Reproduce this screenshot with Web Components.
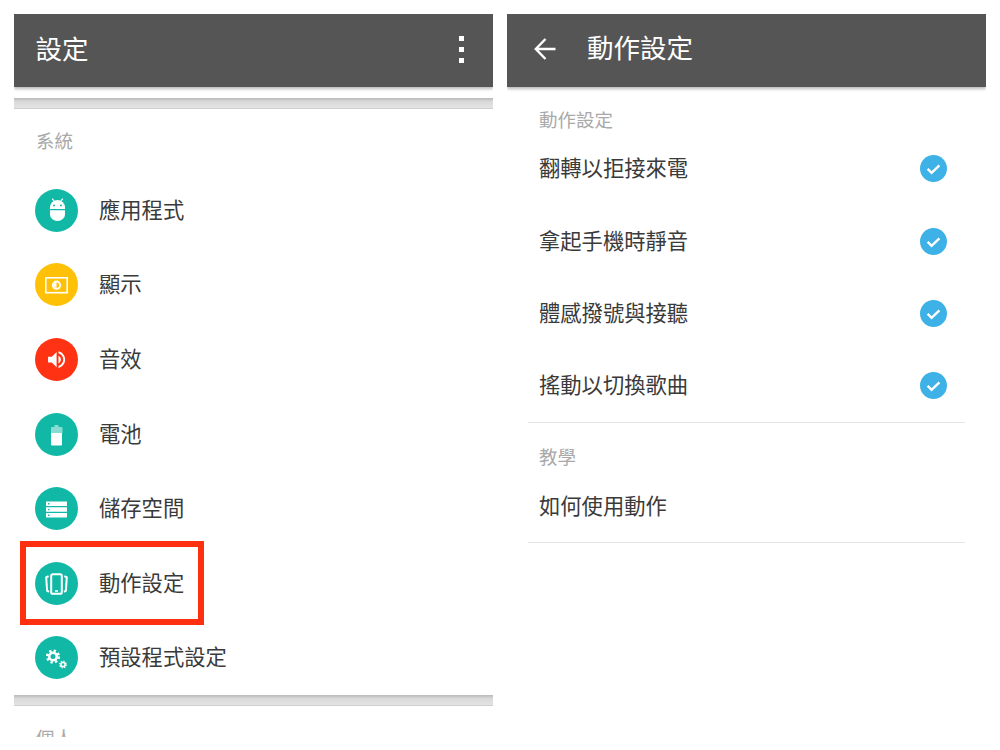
<!DOCTYPE html>
<html lang="zh-Hant">
<head>
<meta charset="UTF-8">
<title>動作設定</title>
<style>
  html, body { margin: 0; background: #fff; }
  body {
    width: 1000px; height: 750px; overflow: hidden;
    font-family: "Noto Sans CJK TC", "Noto Sans", sans-serif;
  }
  #screens { display: flex; gap: 14px; padding: 14px 14px 0; height: 723px; }
</style>
</head>
<body>
<div id="screens">
  <phone-panel>
    <app-bar title="設定" menu></app-bar>
    <gray-band style="margin-top:11px"></gray-band>
    <section-label style="--label-x:22px;--label-h:64px">系統</section-label>
    <setting-row color="#12b8a6" icon="android">應用程式</setting-row>
    <setting-row color="#ffc107" icon="display">顯示</setting-row>
    <setting-row color="#ff3213" icon="sound">音效</setting-row>
    <setting-row color="#12b8a6" icon="battery">電池</setting-row>
    <setting-row color="#12b8a6" icon="storage">儲存空間</setting-row>
    <setting-row color="#12b8a6" icon="motion" marked>動作設定</setting-row>
    <setting-row color="#12b8a6" icon="gears">預設程式設定</setting-row>
    <gray-band></gray-band>
    <section-label style="--label-x:22px;--label-h:64px">個人</section-label>
  </phone-panel>
  <phone-panel>
    <app-bar title="動作設定" back></app-bar>
    <detail-group>
      <section-label style="--label-x:11px;--label-h:25px;padding-top:20.5px">動作設定</section-label>
      <check-row checked>翻轉以拒接來電</check-row>
      <check-row checked>拿起手機時靜音</check-row>
      <check-row checked>體感撥號與接聽</check-row>
      <check-row checked>搖動以切換歌曲</check-row>
    </detail-group>
    <detail-group>
      <section-label style="--label-x:11px;--label-h:25px;padding-top:22px">教學</section-label>
      <check-row>如何使用動作</check-row>
    </detail-group>
  </phone-panel>
</div>

<script>
  // icons are drawn on the 43x43 circle
  const gear = (x, y, r, w) => `
    <circle cx="${x}" cy="${y}" r="${r}" fill="none" stroke="#fff" stroke-width="${w}"/>
    <circle cx="${x}" cy="${y}" r="${r + w * .75}" fill="none" stroke="#fff" stroke-width="${w}"
      stroke-dasharray="${(r + w * .75) * .785 * .5} ${(r + w * .75) * .785 * .5}"/>`;

  const ICONS = {
    android: `
      <path d="M15 20v-1.5a7.5 7.5 0 0 1 15 0V20z" fill="#fff"/>
      <path d="M15 21.2h15v4.3a7.5 6.5 0 0 1-15 0z" fill="#fff"/>
      <path d="M17.3 9.6l1.7 2.6M27.7 9.6L26 12.2" stroke="#fff" stroke-width="1.2"/>
      <circle cx="19" cy="16.6" r="1" fill="#12b8a6"/><circle cx="26" cy="16.6" r="1" fill="#12b8a6"/>`,
    display: `
      <rect x="10.8" y="14.8" width="21.4" height="14.9" fill="none" stroke="#fff" stroke-width="1.6"/>
      <circle cx="21.5" cy="22.2" r="4.6" fill="#fff"/>
      <circle cx="21.5" cy="22.2" r="2.7" fill="#ffc107"/>
      <path d="M21.5 19.5a2.7 2.7 0 0 0 0 5.4z" fill="#fff"/>`,
    sound: `
      <path transform="translate(10.2 10.2) scale(.95)" fill="#fff"
        d="M3 9v6h4l5 5V4L7 9H3zm13.5 3c0-1.77-1.02-3.29-2.5-4.03v8.05c1.48-.73 2.5-2.25 2.5-4.02zM14 3.23v2.06c2.89.86 5 3.54 5 6.71s-2.11 5.85-5 6.71v2.06c4.01-.91 7-4.49 7-8.77s-2.99-7.86-7-8.77z"/>`,
    battery: `
      <path d="M19.5 12h4v2h3a1 1 0 0 1 1 1v5H16v-5a1 1 0 0 1 1-1h2.5z" fill="#fff" fill-opacity=".5"/>
      <path d="M16 20h11v11.5a1 1 0 0 1-1 1h-9a1 1 0 0 1-1-1z" fill="#fff"/>`,
    storage: `
      <path fill="#fff" fill-rule="evenodd" d="M11 14.5h21V19H11zM13 16v1.4h1.4V16zM11 20.3h21v4.5H11zM13 21.9v1.4h1.4v-1.4zM11 26h21v4.5H11zM13 27.6V29h1.4v-1.4z"/>`,
    motion: `
      <rect x="16.2" y="12.2" width="10.6" height="19.6" rx="1.6" fill="none" stroke="#fff" stroke-width="2"/>
      <rect x="20" y="28.2" width="3" height="1.6" fill="#fff"/>
      <path d="M13.6 14.2l-2.4 1.2.9 13.2 1.9 1.2M29.4 14.2l2.4 1.2-.9 13.2-1.9 1.2" fill="none" stroke="#fff" stroke-width="2"/>`,
    gears: gear(18, 20.5, 3.8, 2.6) + gear(28, 28.5, 2.1, 1.5)
  };

  class PhonePanel extends HTMLElement {
    connectedCallback() {
      this.attachShadow({ mode: 'open' }).innerHTML = `
        <style>
          :host { display: block; width: 479px; height: 723px; overflow: hidden; background: #fff; }
        </style>
        <slot></slot>`;
    }
  }

  class AppBar extends HTMLElement {
    connectedCallback() {
      const back = this.hasAttribute('back');
      this.attachShadow({ mode: 'open' }).innerHTML = `
        <style>
          :host {
            display: flex; align-items: center; height: 73px; box-sizing: border-box;
            padding: 0 0 3px 21.5px; background: #555; color: #fff;
            box-shadow: 0 2px 3px rgba(0,0,0,.28); position: relative;
          }
          h1 { margin: 0; padding-bottom: ${back ? 4 : 2}px; font-size: 26.5px; line-height: 36px; font-weight: 400; flex: 1; }
          .back { width: 22px; height: 22px; margin: 0 31.5px 0 5px; display: block; flex: none; }
          .dots { display: flex; flex-direction: column; gap: 6px; margin-right: 29px; }
          .dots i { width: 5px; height: 5px; background: #fff; }
        </style>
        ${back ? `<svg class="back" viewBox="0 0 22 22"><path d="M21.5 11H2M11.5 1L1.8 11l9.7 10" fill="none" stroke="#fff" stroke-width="2.4"/></svg>` : ''}
        <h1>${this.getAttribute('title')}</h1>
        ${this.hasAttribute('menu') ? `<div class="dots"><i></i><i></i><i></i></div>` : ''}`;
    }
  }

  class GrayBand extends HTMLElement {
    connectedCallback() {
      this.attachShadow({ mode: 'open' }).innerHTML = `
        <style>
          :host {
            display: block; height: 11px; box-sizing: border-box;
            background: linear-gradient(#b9b9b9, #d9d9d9 35%, #e2e2e2 90%);
            border-bottom: 1px solid #cfcfcf;
          }
        </style>`;
    }
  }

  class SectionLabel extends HTMLElement {
    connectedCallback() {
      this.attachShadow({ mode: 'open' }).innerHTML = `
        <style>
          :host {
            display: flex; align-items: center; height: var(--label-h);
            padding-left: var(--label-x); color: #a9a9a9;
            font-size: 18.5px; font-weight: 400;
          }
          span { display: block; padding-bottom: 3px; }
        </style>
        <span><slot></slot></span>`;
    }
  }

  class SettingRow extends HTMLElement {
    connectedCallback() {
      const marked = this.hasAttribute('marked');
      this.attachShadow({ mode: 'open' }).innerHTML = `
        <style>
          :host {
            display: flex; align-items: center; gap: 21px; height: 74.6px;
            padding-left: 21px; color: #3a3a3a; font-size: 21.3px; position: relative;
          }
          svg { width: 43px; height: 43px; flex: none; display: block; }
          span { display: block; padding-bottom: 4px; }
          .mark {
            position: absolute; left: 6px; top: -5px; width: 184px; height: 84px;
            box-sizing: border-box; border: 6px solid #ff3010;
          }
        </style>
        <svg viewBox="0 0 43 43"><circle cx="21.5" cy="21.5" r="21.5" fill="${this.getAttribute('color')}"/>${ICONS[this.getAttribute('icon')]}</svg>
        <span><slot></slot></span>
        ${marked ? `<div class="mark"></div>` : ''}`;
    }
  }

  class DetailGroup extends HTMLElement {
    connectedCallback() {
      this.attachShadow({ mode: 'open' }).innerHTML = `
        <style>
          :host { display: block; margin: 0 21px; border-bottom: 1px solid #e4e4e4; }
        </style>
        <slot></slot>`;
    }
  }

  class CheckRow extends HTMLElement {
    connectedCallback() {
      const checked = this.hasAttribute('checked');
      this.attachShadow({ mode: 'open' }).innerHTML = `
        <style>
          :host {
            display: flex; align-items: center; justify-content: space-between; height: 72.4px;
            padding: 0 18.5px 0 11px; color: #3a3a3a; font-size: 21.3px;
          }
          svg { width: 27px; height: 27px; flex: none; display: block; }
          span { display: block; padding-bottom: 4px; }
        </style>
        <span><slot></slot></span>
        ${checked ? `<svg viewBox="0 0 27 27"><circle cx="13.5" cy="13.5" r="13.5" fill="#3eb1e6"/><path d="M7.6 13.8l4 4 7.8-7.4" fill="none" stroke="#fff" stroke-width="2.4"/></svg>` : ''}`;
    }
  }

  customElements.define('phone-panel', PhonePanel);
  customElements.define('app-bar', AppBar);
  customElements.define('gray-band', GrayBand);
  customElements.define('section-label', SectionLabel);
  customElements.define('setting-row', SettingRow);
  customElements.define('detail-group', DetailGroup);
  customElements.define('check-row', CheckRow);
</script>
</body>
</html>
